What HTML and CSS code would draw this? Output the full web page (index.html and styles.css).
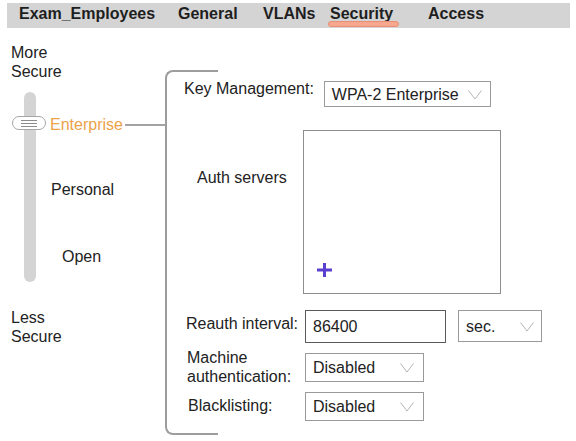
FILE: index.html
```html
<!DOCTYPE html>
<html lang="en">
<head>
    <meta charset="UTF-8">
    <title>Exam_Employees - Security</title>
    <link rel="stylesheet" href="styles.css">
</head>
<body>

<div class="tabs">
    <span class="tab tab-name">Exam_Employees</span>
    <span class="tab tab-general">General</span>
    <span class="tab tab-vlans">VLANs</span>
    <span class="tab tab-security active">Security<i class="tab-mark"></i></span>
    <span class="tab">Access</span>
</div>

<div class="main">
    <div class="levels-col">
        <div class="scale-note">More<br>Secure</div>
        <div class="slider">
            <div class="track">
                <div class="thumb"><span></span></div>
            </div>
            <ul class="levels">
                <li class="level level-active">Enterprise</li>
                <li class="level level-personal">Personal</li>
                <li class="level level-open">Open</li>
            </ul>
        </div>
        <div class="scale-note less">Less<br>Secure</div>
    </div>

    <div class="panel">
        <div class="row row-key">
            <span class="key-label">Key Management:</span>
            <div class="dropdown dd-wpa">
                <span>WPA-2 Enterprise</span>
                <svg class="chev" width="14" height="10" viewBox="0 0 14 10"><polyline points="0.5,0.5 7,9 13.5,0.5" fill="none" stroke="#b4b4b4" stroke-width="1"/></svg>
            </div>
        </div>

        <div class="row row-auth">
            <span class="field-label auth-label">Auth servers</span>
            <div class="auth-box">
                <svg class="plus" width="15" height="14" viewBox="0 0 15 14"><path d="M7.5 0v14M0 7h15" stroke="#5a3fd0" stroke-width="3"/></svg>
            </div>
        </div>

        <div class="row row-reauth">
            <span class="field-label reauth-label">Reauth interval:</span>
            <input class="text-input" type="text" value="86400">
            <div class="dropdown dd-unit">
                <span>sec.</span>
                <svg class="chev" width="14" height="10" viewBox="0 0 14 10"><polyline points="0.5,0.5 7,9 13.5,0.5" fill="none" stroke="#b4b4b4" stroke-width="1"/></svg>
            </div>
        </div>

        <div class="row row-machine">
            <span class="field-label machine-label">Machine<br>authentication:</span>
            <div class="dropdown dd-small dd-machine">
                <span>Disabled</span>
                <svg class="chev" width="14" height="10" viewBox="0 0 14 10"><polyline points="0.5,0.5 7,9 13.5,0.5" fill="none" stroke="#b4b4b4" stroke-width="1"/></svg>
            </div>
        </div>

        <div class="row row-black">
            <span class="field-label black-label">Blacklisting:</span>
            <div class="dropdown dd-small">
                <span>Disabled</span>
                <svg class="chev" width="14" height="10" viewBox="0 0 14 10"><polyline points="0.5,0.5 7,9 13.5,0.5" fill="none" stroke="#b4b4b4" stroke-width="1"/></svg>
            </div>
        </div>
    </div>
</div>

</body>
</html>
```

FILE: styles.css
```css
body {
    margin: 0;
    font-family: "Liberation Sans", Arial, sans-serif;
    font-size: 16px;
    line-height: 19px;
    color: #222;
    background: #fff;
}

/* tab bar */
.tabs {
    display: flex;
    margin: 3px 6px 0 7px;
    height: 25px;
    padding-left: 12px;
    background-color: #d4d4d4;
}
.tab {
    display: flex;
    flex-direction: column;
    padding-top: 2px;
    font-weight: bold;
    line-height: 17px;
    color: #1e1e1e;
}
.tab-name { width: 159px; }
.tab-general { width: 85px; }
.tab-vlans { width: 65px; }
.tab-security {
    width: 98px;
    padding-left: 2px;
}
.tab-mark {
    display: block;
    width: 71px;
    height: 6px;
    margin: -1px 0 0 -2px;
    box-sizing: border-box;
    background-color: #f7a78d;
    border: 1px solid #e98e74;
    border-radius: 3px;
}

.main {
    display: flex;
    align-items: flex-start;
}

/* left side: security level slider */
.levels-col {
    width: 165px;
    flex: 0 0 165px;
    box-sizing: border-box;
    padding-left: 11px;
    margin-top: 15px;
}
.scale-note {
    color: #222;
}
.scale-note.less {
    margin-top: 26px;
}
.slider {
    display: flex;
    height: 190px;
    margin-top: 11px;
    margin-left: 13px;
}
.track {
    position: relative;
    width: 12px;
    flex: 0 0 12px;
    background-color: #d4d4d4;
    border-radius: 6px;
}
.thumb {
    position: absolute;
    top: 24px;
    left: -12px;
    width: 34px;
    height: 14px;
    box-sizing: border-box;
    display: flex;
    align-items: center;
    justify-content: center;
    background: #fff;
    border: 1px solid #a6a6a6;
    border-radius: 7px;
}
.thumb span {
    display: block;
    width: 16px;
    height: 7px;
    background: linear-gradient(#8c8c8c 1px, transparent 1px) 0 0 / 100% 3px repeat-y;
}
.levels {
    flex: 1;
    list-style: none;
    margin: 0 0 0 14px;
    padding: 0;
}
.level-active {
    display: flex;
    align-items: center;
    margin-top: 23px;
    color: #eba349;
}
.level-active::after {
    content: "";
    flex: 1;
    height: 2px;
    margin-left: 2px;
    background-color: #a3a3a3;
}
.level-personal {
    margin-top: 46px;
    padding-left: 1px;
}
.level-open {
    margin-top: 48px;
    padding-left: 12px;
}

/* right side: bracketed settings */
.panel {
    position: relative;
    margin-top: 42px;
    padding: 9px 0 14px 19px;
    background: linear-gradient(#9d9d9d, #9d9d9d) no-repeat 0 14px / 2px calc(100% - 28px);
}
.panel::before,
.panel::after {
    content: "";
    position: absolute;
    left: 0;
    width: 53px;
    height: 14px;
    box-sizing: border-box;
    border-left: 2px solid #9d9d9d;
}
.panel::before {
    top: 0;
    border-top: 2px solid #9d9d9d;
    border-top-left-radius: 8px;
}
.panel::after {
    bottom: 0;
    border-bottom: 2px solid #9d9d9d;
    border-bottom-left-radius: 8px;
}

.row {
    display: flex;
    align-items: flex-start;
}
.row-auth { margin-top: 23px; }
.row-reauth { margin-top: 16px; }
.row-machine { margin-top: 5px; }
.row-black { margin-top: 6px; }

.key-label {
    margin-right: 10px;
}
.field-label {
    width: 121px;
    flex: 0 0 121px;
    box-sizing: border-box;
}
.auth-label {
    width: 119px;
    flex-basis: 119px;
    padding-left: 13px;
    margin-top: 38px;
}
.reauth-label {
    padding-left: 2px;
    margin-top: 4px;
}
.machine-label {
    padding-left: 3px;
}
.black-label {
    padding-left: 4px;
    margin-top: 4px;
}

.dropdown {
    display: flex;
    align-items: center;
    justify-content: space-between;
    box-sizing: border-box;
    background: #fff;
    border: 1px solid #9a9a9a;
    padding: 0 8px 0 7px;
}
.dd-wpa {
    width: 167px;
    height: 26px;
    margin-top: 2px;
    padding-right: 8px;
}
.dd-unit {
    width: 84px;
    height: 32px;
    margin-left: 12px;
    padding-right: 7px;
}
.dd-small {
    width: 119px;
    height: 29px;
    padding-right: 9px;
}
.dd-machine {
    margin-top: 5px;
}
.chev {
    display: block;
    margin-top: 1px;
}

.auth-box {
    width: 198px;
    height: 164px;
    box-sizing: border-box;
    display: flex;
    align-items: flex-end;
    padding: 0 0 16px 13px;
    border: 1px solid #8e8e8e;
}
.plus {
    display: block;
}

.text-input {
    width: 141px;
    height: 33px;
    box-sizing: border-box;
    margin: 0;
    padding: 0 7px;
    font-family: "Liberation Sans", Arial, sans-serif;
    font-size: 16px;
    color: #222;
    border: 1px solid #5a5a5a;
    outline: none;
}
```
